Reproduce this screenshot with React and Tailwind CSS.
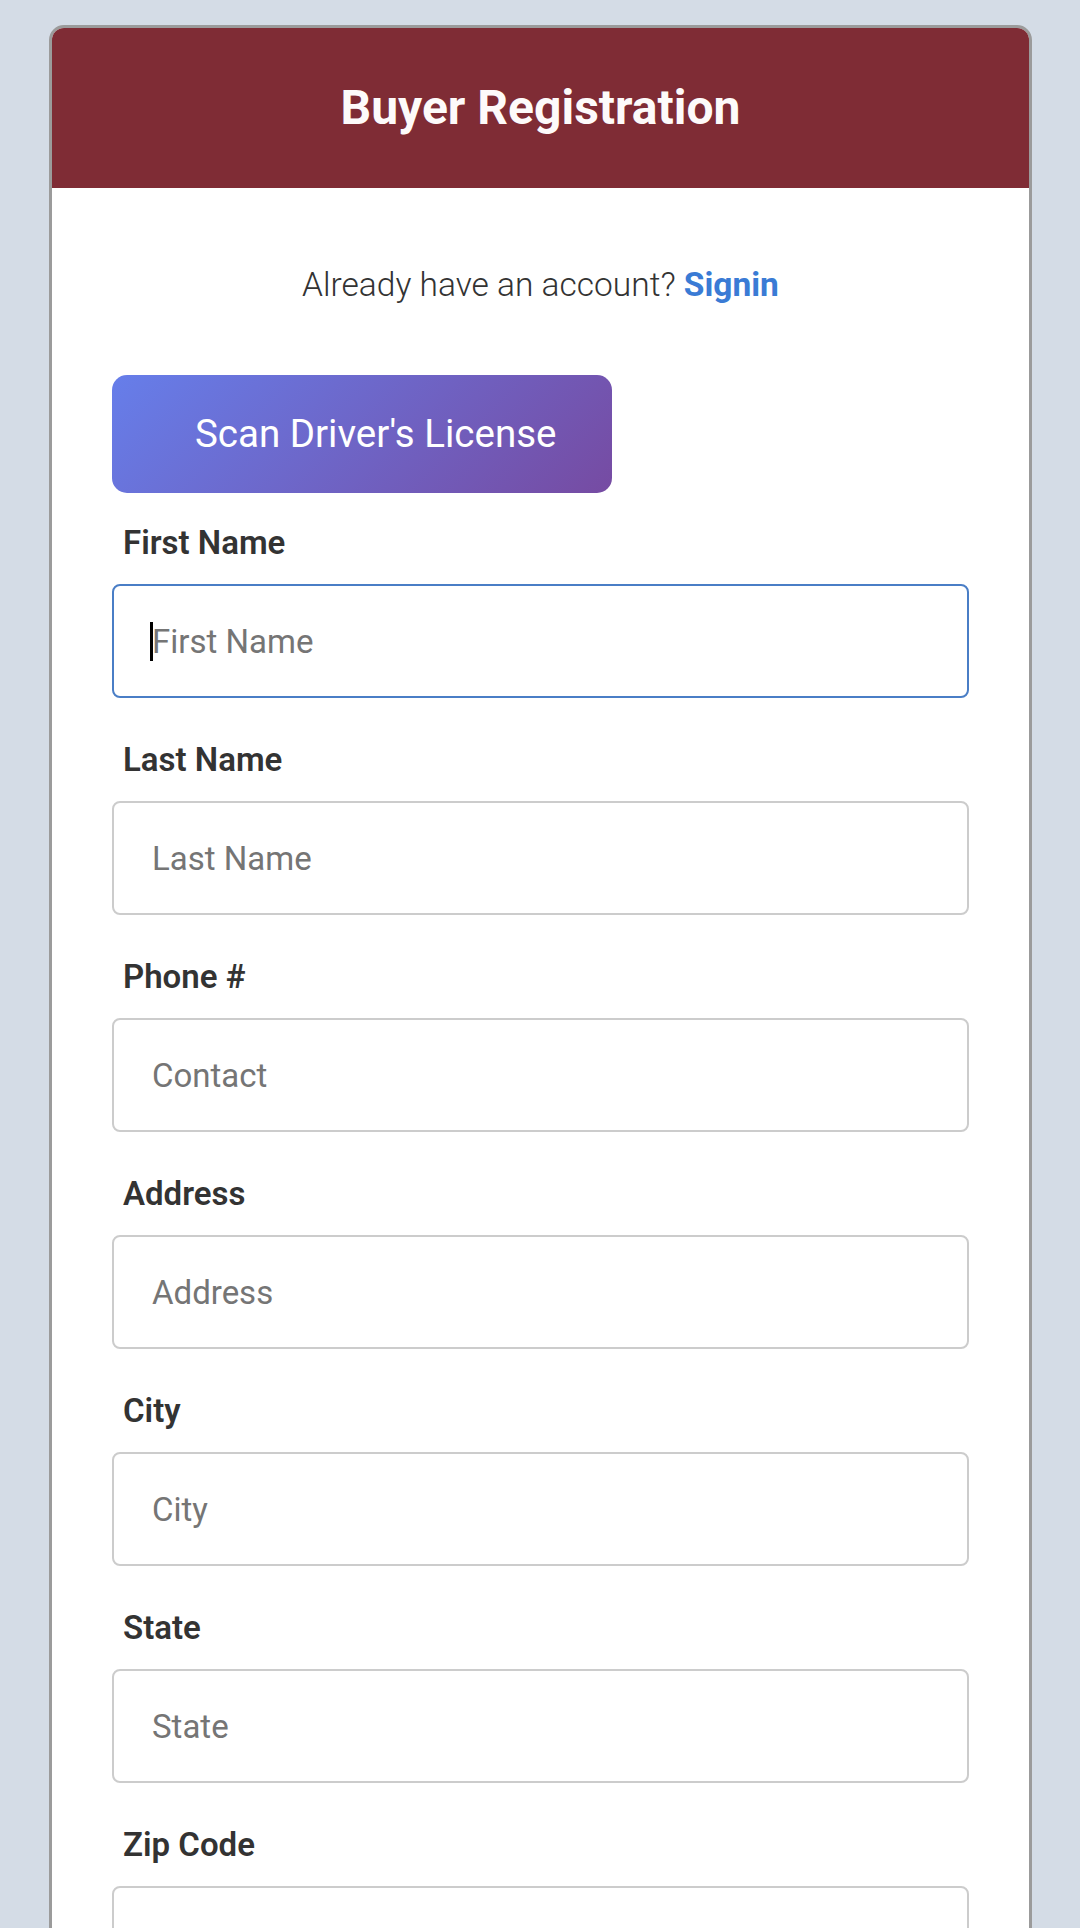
import React, { useState } from 'react';

const fields = [
  { id: 'firstName', label: 'First Name', placeholder: 'First Name' },
  { id: 'lastName', label: 'Last Name', placeholder: 'Last Name' },
  { id: 'phone', label: 'Phone #', placeholder: 'Contact' },
  { id: 'address', label: 'Address', placeholder: 'Address' },
  { id: 'city', label: 'City', placeholder: 'City' },
  { id: 'state', label: 'State', placeholder: 'State' },
  { id: 'zip', label: 'Zip Code', placeholder: 'Zip Code' },
];

export default function App() {
  const [form, setForm] = useState({});

  const update = (id) => (e) => setForm((f) => ({ ...f, [id]: e.target.value }));

  return (
    <div className="min-h-screen bg-[#d4dce6] pt-[25px] pl-[49px] font-['Roboto','Liberation_Sans',sans-serif]">
      <div className="w-[983px] rounded-[15px] border-[3px] border-[#9b9b9b] bg-white overflow-hidden">
        {/* Encabezado */}
        <div className="h-[160px] bg-[#7f2c35] flex items-center justify-center">
          <h1 className="text-[48px] font-bold text-[#fdfafa] leading-[1.2]">Buyer Registration</h1>
        </div>

        <div className="px-[60px] pt-[77px] pb-[60px]">
          <p className="text-center text-[33.5px] font-light leading-[40px] text-[#333]">
            Already have an account?{' '}
            <a href="#" className="font-bold text-[#3a7bd5]">Signin</a>
          </p>

          <button
            type="button"
            className="mt-[70px] h-[118px] w-[500px] rounded-[15px] bg-[linear-gradient(135deg,#667eea_0%,#764ba2_100%)] pl-[83px] text-left text-[38.5px] text-white leading-none"
          >
            Scan Driver's License
          </button>

          <form className="mt-[30px] flex flex-col gap-[42px]" onSubmit={(e) => e.preventDefault()}>
            {fields.map((f, i) => (
              <div key={f.id}>
                <label
                  htmlFor={f.id}
                  className="block pl-[11px] mb-[21px] text-[33px] font-semibold leading-[40px] text-[#333]"
                >
                  {f.label}
                </label>
                <div className="relative">
                  <input
                    id={f.id}
                    type="text"
                    placeholder={f.placeholder}
                    value={form[f.id] || ''}
                    onChange={update(f.id)}
                    className={
                      i === 0
                        ? 'block w-full h-[114px] rounded-[8px] border-2 border-[#4a7ec6] pl-[38px] text-[33px] text-[#333] placeholder:text-[#757575] outline-none'
                        : 'block w-full h-[114px] rounded-[8px] border-2 border-[#cccccc] pl-[38px] text-[33px] text-[#333] placeholder:text-[#757575] outline-none'
                    }
                  />
                  {/* cursor del campo activo */}
                  {i === 0 && !form[f.id] && (
                    <span className="pointer-events-none absolute left-[38px] top-[38px] h-[39px] w-[3px] bg-black" />
                  )}
                </div>
              </div>
            ))}
          </form>
        </div>
      </div>
    </div>
  );
}
